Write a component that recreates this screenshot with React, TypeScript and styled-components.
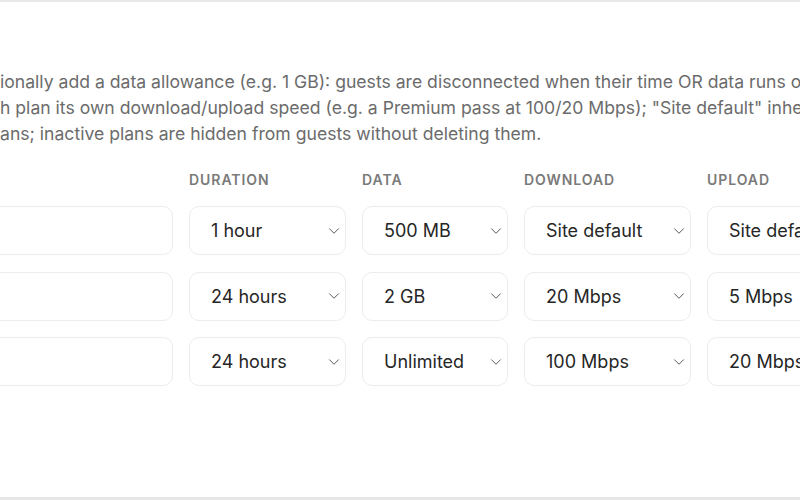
import styled, { createGlobalStyle } from "styled-components";
import { ChevronDown } from "lucide-react";

const GlobalStyle = createGlobalStyle`
  html, body {
    margin: 0;
    padding: 0;
    background: #ffffff;
  }
  body {
    font-family: "Inter", "Liberation Sans", sans-serif;
  }
`;

type Plan = {
  name: string;
  duration: string;
  data: string;
  download: string;
  upload: string;
};

const plans: Plan[] = [
  { name: "", duration: "1 hour", data: "500 MB", download: "Site default", upload: "Site default" },
  { name: "", duration: "24 hours", data: "2 GB", download: "20 Mbps", upload: "5 Mbps" },
  { name: "", duration: "24 hours", data: "Unlimited", download: "100 Mbps", upload: "20 Mbps" },
];

function Select({ value }: { value: string }) {
  return (
    <SelectBox>
      <SelectValue>{value}</SelectValue>
      <Chevron size={18} strokeWidth={1.3} />
    </SelectBox>
  );
}

function App() {
  return (
    <>
      <GlobalStyle />
      <Page>
        <Description>
          <Line>ionally add a data allowance (e.g. 1 GB): guests are disconnected when their time OR data runs out.</Line>
          <Line>h plan its own download/upload speed (e.g. a Premium pass at 100/20 Mbps); "Site default" inherits the site limits.</Line>
          <Line>ans; inactive plans are hidden from guests without deleting them.</Line>
        </Description>

        <Table>
          <HeadCell />
          <HeadCell>Duration</HeadCell>
          <HeadCell>Data</HeadCell>
          <HeadCell>Download</HeadCell>
          <HeadCell>Upload</HeadCell>

          {plans.map((plan, i) => (
            <Row key={i}>
              <TextInput type="text" defaultValue={plan.name} />
              <Select value={plan.duration} />
              <Select value={plan.data} />
              <Select value={plan.download} />
              <Select value={plan.upload} />
            </Row>
          ))}
        </Table>
      </Page>
    </>
  );
}

const Page = styled.div`
  width: 800px;
  height: 500px;
  box-sizing: border-box;
  overflow: hidden;
  border-top: 2px solid #e8e8e8;
  border-bottom: 3px solid #e6e6e6;
  padding-top: 67px;
`;

const Description = styled.div`
  color: #6b6b6b;
  font-size: 17.6px;
  line-height: 26px;
  white-space: nowrap;
`;

const Line = styled.div``;

const Table = styled.div`
  display: grid;
  grid-template-columns: 233px 157px 146px 167px 167px;
  column-gap: 16px;
  row-gap: 16.5px;
  margin-top: 23px;
  margin-left: -60px;
  width: max-content;
`;

const HeadCell = styled.div`
  color: #7a7a7a;
  font-size: 14px;
  font-weight: 600;
  letter-spacing: 0.95px;
  text-transform: uppercase;
  line-height: 20px;
  margin-bottom: -0.5px;
`;

const Row = styled.div`
  display: contents;
`;

const fieldBase = `
  box-sizing: border-box;
  height: 49px;
  border: 1.5px solid #ececec;
  border-radius: 10px;
  background: #ffffff;
`;

const TextInput = styled.input`
  ${fieldBase}
  width: 100%;
  padding: 0 20px;
  font: inherit;
  outline: none;
`;

const SelectBox = styled.div`
  ${fieldBase}
  display: flex;
  align-items: center;
  justify-content: space-between;
  padding: 0 2px 0 21px;
  color: #262626;
  font-size: 18px;
`;

const SelectValue = styled.span`
  white-space: nowrap;
`;

const Chevron = styled(ChevronDown)`
  color: #555555;
  flex-shrink: 0;
`;

export default App;
